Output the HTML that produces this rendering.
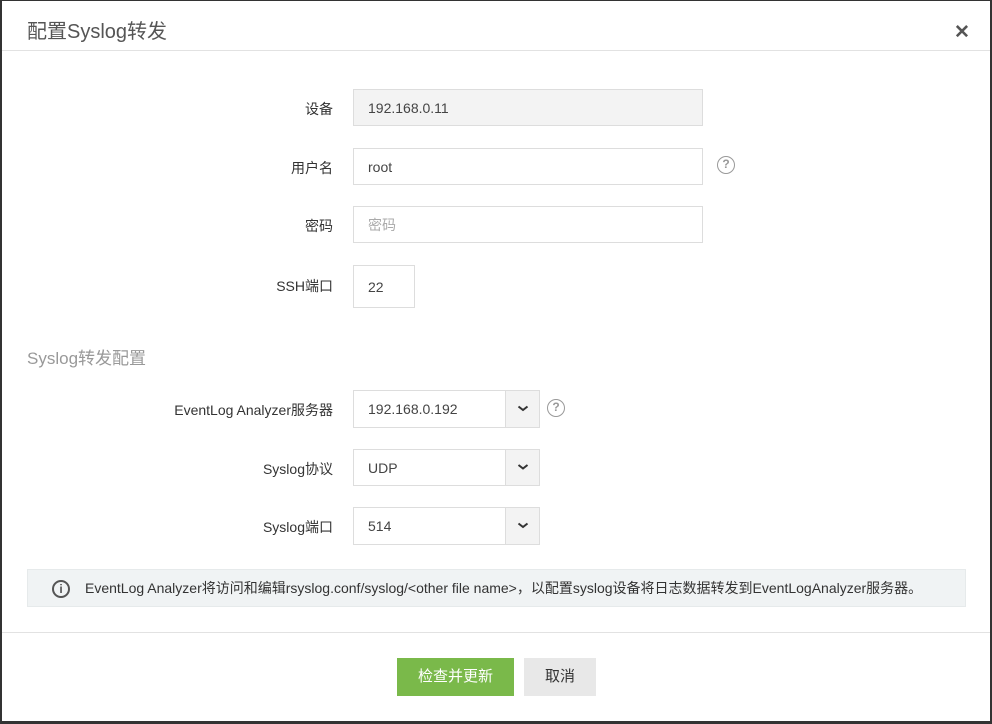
<!DOCTYPE html>
<html><head><meta charset="utf-8"><style>
*{box-sizing:border-box;margin:0;padding:0}
body{width:992px;height:724px;background:#333;font-family:"Liberation Sans","Noto Sans CJK SC",sans-serif;position:relative;overflow:hidden;color:#333}
.m{position:absolute;left:2px;top:1px;width:988px;height:720px;background:#fff}
.a{position:absolute}
.t{left:25px;top:14px;font-size:20px;color:#555}
.x{left:952px;top:20px;font-size:19px;font-weight:bold;color:#555}
.hr{left:0;width:988px;height:1px;background:#e2e2e2}
.l{width:331px;text-align:right;font-size:14px;color:#333;left:0}
.i{border:1px solid #ddd;font-size:14px;color:#444;padding-left:14px;display:flex;align-items:center;background:#fff}
.dd{position:absolute;right:0;top:0;bottom:0;width:34px;background:#f3f3f3;border-left:1px solid #ddd}
.q{width:18px;height:18px;border:1.5px solid #999;border-radius:50%;font-size:12px;color:#999;text-align:center;line-height:15px;font-weight:bold}
</style></head><body>
<div class="m">
<div class="a t">配置Syslog转发</div>
<div class="a x">✕</div>
<div class="a hr" style="top:49px"></div>

<div class="a l" style="top:98px">设备</div>
<div class="a i" style="left:351px;top:88px;width:350px;height:37px;background:#f3f3f3">192.168.0.11</div>
<div class="a l" style="top:157px">用户名</div>
<div class="a i" style="left:351px;top:147px;width:350px;height:37px">root</div>
<div class="a q" style="left:715px;top:155px">?</div>
<div class="a l" style="top:215px">密码</div>
<div class="a i" style="left:351px;top:205px;width:350px;height:37px;color:#aaa">密码</div>
<div class="a l" style="top:275px">SSH端口</div>
<div class="a i" style="left:351px;top:264px;width:62px;height:43px">22</div>

<div class="a" style="left:25px;top:343px;font-size:17px;color:#999">Syslog转发配置</div>

<div class="a l" style="top:399px">EventLog Analyzer服务器</div>
<div class="a i" style="left:351px;top:389px;width:187px;height:38px">192.168.0.192<div class="dd"><svg width="34" height="36"><path d="M12.5 15.5l4.5 3.5 4.5-3.5" stroke="#333" stroke-width="2" fill="none"/></svg></div></div>
<div class="a q" style="left:545px;top:398px">?</div>
<div class="a l" style="top:458px">Syslog协议</div>
<div class="a i" style="left:351px;top:448px;width:187px;height:37px">UDP<div class="dd"><svg width="34" height="35"><path d="M12.5 15l4.5 3.5 4.5-3.5" stroke="#333" stroke-width="2" fill="none"/></svg></div></div>
<div class="a l" style="top:516px">Syslog端口</div>
<div class="a i" style="left:351px;top:506px;width:187px;height:38px">514<div class="dd"><svg width="34" height="36"><path d="M12.5 15.5l4.5 3.5 4.5-3.5" stroke="#333" stroke-width="2" fill="none"/></svg></div></div>

<div class="a" style="left:25px;top:568px;width:939px;height:38px;background:#f0f3f4;border:1px solid #e6eaeb;font-size:14px;color:#333;line-height:36px;padding-left:57px">EventLog Analyzer将访问和编辑rsyslog.conf/syslog/&lt;other file name&gt;，以配置syslog设备将日志数据转发到EventLogAnalyzer服务器。</div>
<div class="a" style="left:50px;top:579px;width:18px;height:18px;border:2px solid #555;border-radius:50%;font-size:12px;font-weight:bold;color:#555;text-align:center;line-height:14px">i</div>

<div class="a hr" style="top:631px"></div>
<div class="a" style="left:395px;top:657px;width:117px;height:38px;background:#7ab94a;color:#fff;font-size:15px;text-align:center;line-height:38px">检查并更新</div>
<div class="a" style="left:522px;top:657px;width:72px;height:38px;background:#e8e8e8;color:#333;font-size:15px;text-align:center;line-height:38px">取消</div>
</div>
</body></html>
